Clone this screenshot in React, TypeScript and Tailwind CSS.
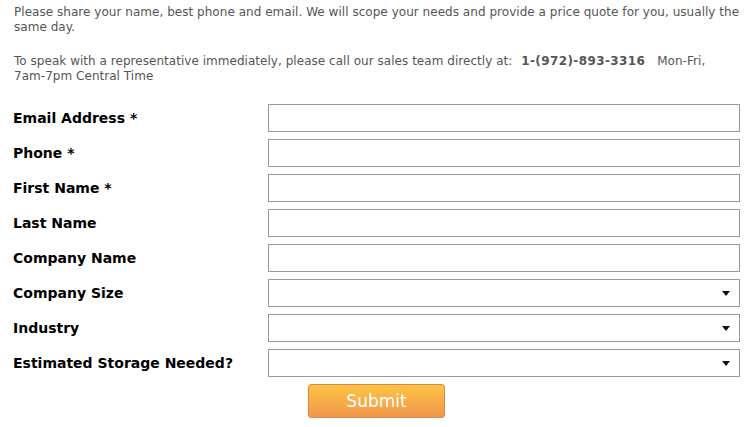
import React from "react";

const fields: { label: string; select?: boolean }[] = [
  { label: "Email Address *" },
  { label: "Phone *" },
  { label: "First Name *" },
  { label: "Last Name" },
  { label: "Company Name" },
  { label: "Company Size", select: true },
  { label: "Industry", select: true },
  { label: "Estimated Storage Needed?", select: true },
];

export default function App() {
  return (
    <div
      className="w-[753px] h-[427px] bg-white overflow-hidden px-[13px]"
      style={{ fontFamily: '"DejaVu Sans", Verdana, sans-serif' }}
    >
      <div className="pt-[5px] pl-[1px] text-[12px] leading-[15px] tracking-[0.035px] text-[#555555]">
        <p>
          Please share your name, best phone and email. We will scope your needs and provide a price quote for you, usually the same day.
        </p>
        <p className="mt-[19px]">
          To speak with a representative immediately, please call our sales team directly at:{" "}
          <b className="font-bold ml-[5px] mr-[8px] tracking-[0.4px]">1-(972)-893-3316</b> Mon-Fri,{" "}
          <span className="whitespace-nowrap">7am-7pm</span> Central Time
        </p>
      </div>
      <div className="mt-[20px] flex flex-col gap-[7px]">
        {fields.map((f) => (
          <div key={f.label} className="flex items-center">
            <div className="w-[256px] text-[14px] font-bold text-black">{f.label}</div>
            <div className="w-[474px] h-[28px] border border-[#999999] bg-white flex items-center justify-end pr-[9px]">
              {f.select && (
                <svg width="8" height="5" viewBox="0 0 8 5">
                  <path d="M0 0H8L4 5Z" fill="#111" />
                </svg>
              )}
            </div>
          </div>
        ))}
      </div>
      <div className="flex justify-center mt-[7px]">
        <button className="w-[137px] h-[34px] rounded-[3px] border border-[#d98a4a] bg-gradient-to-b from-[#fcc442] to-[#f1964c] text-white text-[17px] leading-none">
          Submit
        </button>
      </div>
    </div>
  );
}
